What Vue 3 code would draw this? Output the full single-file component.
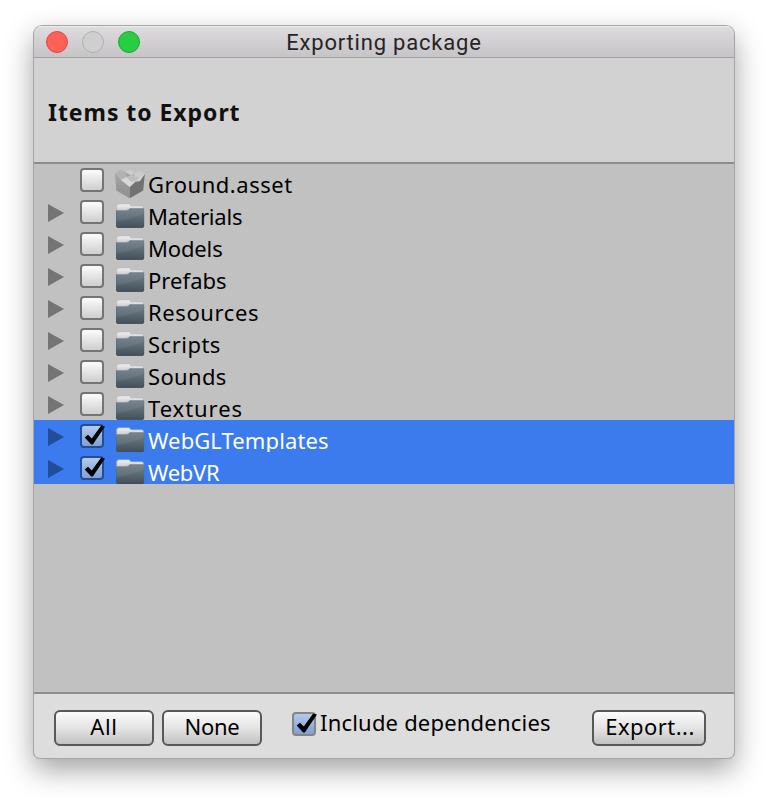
<script setup>
const rows = [
  { name: 'Ground.asset', kind: 'asset', spacing: 0.53 },
  { name: 'Materials', spacing: -0.18 },
  { name: 'Models', spacing: -0.15 },
  { name: 'Prefabs', spacing: 0.05 },
  { name: 'Resources', spacing: 0.6 },
  { name: 'Scripts', spacing: 0.5 },
  { name: 'Sounds', spacing: 0.35 },
  { name: 'Textures', spacing: 0.95 },
  { name: 'WebGLTemplates', checked: true, spacing: 0.1 },
  { name: 'WebVR', checked: true, spacing: -0.3 },
]
</script>

<template>
  <main class="stage">
    <section class="window">
      <header class="titlebar">
        <div class="lights">
          <i class="light close"></i>
          <i class="light minimize"></i>
          <i class="light zoom"></i>
        </div>
        <span class="title">Exporting package</span>
      </header>

      <div class="heading"><h1>Items to Export</h1></div>

      <div class="list">
        <div v-for="row in rows" :key="row.name" class="row" :class="{ selected: row.checked }">
          <svg class="arrow" viewBox="0 0 16 18" width="16" height="18">
            <path v-if="row.kind !== 'asset'" d="M0 0L16 9L0 18Z" />
          </svg>
          <span class="check" :class="{ on: row.checked }">
            <svg v-if="row.checked" viewBox="0 0 26 24" width="26" height="24">
              <path d="M4.7 13.6L8 10.7L11.8 14.6L21.2 1.6L25 2.6L12.8 20.6H11.2Z" />
            </svg>
          </span>
          <svg v-if="row.kind === 'asset'" class="icon" viewBox="0 0 32 32" width="32" height="32">
            <defs>
              <linearGradient id="cubeLeft" x1="0" y1="0" x2="0" y2="1">
                <stop offset="0" stop-color="#a6a6a6" /><stop offset="1" stop-color="#8e8e8e" />
              </linearGradient>
            </defs>
            <path d="M1 4L6.5 1L11 3L16.5 .5L20.5 4L26.5 1.8L30.8 5L29.2 21.5L15.8 29.3L2.3 21.5Z" fill="#b9b9b9" />
            <path d="M1 4L7 11L15.8 18V29.3L2.3 21.5Z" fill="url(#cubeLeft)" />
            <path d="M15.8 18L21 13L25 12.5L30.8 5L29.2 21.5L15.8 29.3Z" fill="#727272" />
            <path d="M1 4L6.5 1L11 3L12.5 8L8 10.5L4.5 8Z" fill="#b3b3b3" />
            <path d="M11 3L16.5 .5L20.5 4L17 6.5Z" fill="#cecece" />
            <path d="M11 3L17 6.5L19 9L12.5 8Z" fill="#a5a5a5" />
            <path d="M20.5 4L26.5 1.8L30.8 5L25 9L21 8Z" fill="#cbcbcb" />
            <path d="M7 11L12.5 8L17 12.5L22 12L15.8 18Z" fill="#d8d8d8" />
            <path d="M17 6.5L21 8L25 9L22 12L17 12.5L12.5 8Z" fill="#bdbdbd" />
            <path d="M22 12L25 9L30.8 5L26 12Z" fill="#d4d4d4" />
          </svg>
          <svg v-else class="icon" viewBox="0 0 32 32" width="32" height="32">
            <defs>
              <linearGradient id="folderBody" x1="0" y1="0" x2="0" y2="1">
                <stop offset="0" stop-color="#71828b" /><stop offset="1" stop-color="#435159" />
              </linearGradient>
              <linearGradient id="folderTab" x1="0" y1="0" x2="0" y2="1">
                <stop offset="0" stop-color="#f0f0f0" /><stop offset="1" stop-color="#c4c4c4" />
              </linearGradient>
            </defs>
            <path d="M2.6 12V5.5Q2.6 2.8 5 2.8H14.2Q15.6 2.8 16.4 4L17 4.8H27.6Q29.6 4.8 29.6 6.8V12Z" fill="url(#folderTab)" stroke="#a3a5a6" stroke-width=".5" />
            <path d="M2 9.8Q2 8.9 3 8.9H12.6Q13.8 8.9 14.8 7.9Q15.8 6.9 17 6.9H28.8Q30.2 6.9 30.2 8.2V25Q30.2 26.7 28.5 26.7H3.6Q2 26.7 2 25Z" fill="url(#folderBody)" />
            <path d="M2.8 9.5H12.8Q14.2 9.5 15.2 8.5Q16.1 7.5 17.4 7.5H29.3" fill="none" stroke="#90a0a8" stroke-width=".8" />
            <path d="M3 10.2H13.4L17 8.2H29.4V13Q22 17 3 20Z" fill="#8fa0a8" opacity=".18" />
            <path d="M3 26.4H29.2" stroke="#3b474e" stroke-width=".7" />
          </svg>
          <span class="name" :style="{ letterSpacing: row.spacing + 'px' }">{{ row.name }}</span>
        </div>
      </div>

      <footer class="footer">
        <button class="btn">All</button>
        <button class="btn none">None</button>
        <label class="include">
          <span class="check on">
            <svg viewBox="0 0 26 24" width="26" height="24">
              <path d="M4.7 13.6L8 10.7L11.8 14.6L21.2 1.6L25 2.6L12.8 20.6H11.2Z" />
            </svg>
          </span>
          <span class="include-text">Include dependencies</span>
        </label>
        <button class="btn export">Export...</button>
      </footer>
    </section>
  </main>
</template>

<style>
body {
  margin: 0;
  background: #fff;
}
</style>

<style scoped>
.stage {
  box-sizing: border-box;
  width: 768px;
  height: 800px;
  padding: 26px 34px 42px;
  overflow: hidden;
  font-family: "Noto Sans", "Open Sans", sans-serif;
  font-size: 22px;
  color: #000;
}
.window {
  display: flex;
  flex-direction: column;
  height: 732px;
  border-radius: 8px 8px 6px 6px;
  overflow: hidden;
  background: #ddd;
  box-shadow: 0 0 0 1px #a5a5a5, 0 11px 28px 1px rgba(0, 0, 0, 0.36);
}
.titlebar {
  box-sizing: border-box;
  flex: none;
  display: grid;
  grid-template-columns: 120px 1fr 120px;
  align-items: center;
  height: 32px;
  border-bottom: 1px solid #a3a1a3;
  background: linear-gradient(#dedcde, #c6c4c6);
  box-shadow: inset 0 1px #f0eff0;
}
.lights {
  display: flex;
  gap: 14px;
  padding: 1px 0 0 12px;
}
.light {
  box-sizing: border-box;
  width: 22px;
  height: 22px;
  border: 1px solid #b0aeb0;
  border-radius: 50%;
  background: #d0cfd0;
}
.close {
  border-color: #e2463f;
  background: #ff6159;
}
.zoom {
  border-color: #1aab29;
  background: #28cd41;
}
.title {
  padding-top: 2px;
  text-align: center;
  font: 22px/28px Roboto, sans-serif;
  letter-spacing: 0.8px;
  color: #262426;
}
.heading {
  box-sizing: border-box;
  flex: none;
  height: 106px;
  padding: 37px 14px 0;
  border-bottom: 2px solid #8d8d8d;
  background: #d2d2d2;
}
h1 {
  margin: 0;
  font-size: 23px;
  line-height: 34px;
  letter-spacing: 0.95px;
  color: #111;
}
.list {
  flex: none;
  height: 528px;
  border-bottom: 2px solid #8d8d8d;
  background: #c1c1c1;
}
.row {
  display: flex;
  align-items: flex-start;
  isolation: isolate;
  height: 32px;
  padding-left: 14px;
}
.selected {
  background: #3c7bed;
  color: #fff;
}
.arrow {
  flex: none;
  margin: 8px 16px 0 0;
  fill: #757575;
}
.selected .arrow {
  fill: #234d97;
}
.check {
  box-sizing: border-box;
  flex: none;
  width: 24px;
  height: 24px;
  border: 2px solid #757575;
  border-radius: 4px;
  background: linear-gradient(#fbfbfb, #cfcfcf);
}
.row .check {
  margin-top: 4px;
}
.check.on {
  background: linear-gradient(#b2cae9, #819fd5);
}
.selected .check {
  border-color: #234d97;
}
.include .check {
  border-color: #858585;
}
.check svg {
  display: block;
  margin: -2px;
  overflow: visible;
}
.icon {
  flex: none;
  margin: 5px 2px 0 10px;
}
.name {
  padding-top: 5px;
  line-height: 30px;
  white-space: nowrap;
}
.footer {
  box-sizing: border-box;
  display: flex;
  align-items: flex-start;
  height: 64px;
  padding: 16px 28px 0 20px;
}
.btn {
  box-sizing: border-box;
  width: 100px;
  height: 36px;
  margin: 0;
  padding: 0 0 4px;
  border: 2px solid #585858;
  border-radius: 6px;
  background: linear-gradient(#fefefe, #e4e4e4 50%, #bdbdbd) border-box;
  color: #000;
  font: 22px/28px "Noto Sans", "Open Sans", sans-serif;
  letter-spacing: 0.7px;
}
.none {
  margin-left: 8px;
  letter-spacing: -0.3px;
}
.include {
  display: flex;
  margin: 2px 0 0 30px;
}
.include-text {
  margin: -5px 0 0 4px;
  line-height: 30px;
  letter-spacing: 0.2px;
  white-space: nowrap;
}
.export {
  width: 114px;
  margin-left: auto;
  padding-left: 2px;
  letter-spacing: 0.45px;
}
</style>
